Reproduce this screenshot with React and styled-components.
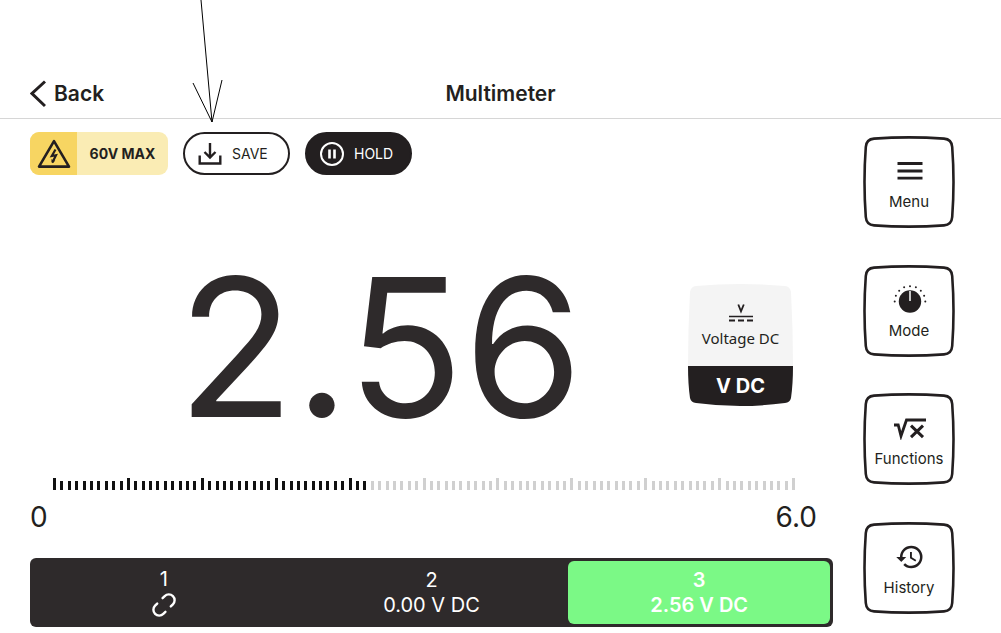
import styled, { createGlobalStyle } from "styled-components";
import { MdHistory } from "react-icons/md";

const GlobalStyle = createGlobalStyle`
  * {
    box-sizing: border-box;
  }
  body {
    margin: 0;
    background: #fff;
    color: #231f20;
    font-family: Inter, "Liberation Sans", sans-serif;
  }
  button {
    font-family: inherit;
    color: inherit;
    border: none;
    background: none;
    padding: 0;
    cursor: pointer;
  }
`;

const Header = styled.header`
  display: grid;
  grid-template-columns: 1fr auto 1fr;
  align-items: center;
  padding: 79px 30px 9px;
  border-bottom: 1px solid #d6d6d6;
`;

const BackButton = styled.button`
  justify-self: start;
  display: flex;
  align-items: center;
  gap: 8px;
  font-size: 21px;
  font-weight: 600;
  line-height: 30px;
`;

const Title = styled.h1`
  margin: 0;
  font-size: 21px;
  font-weight: 600;
  line-height: 30px;
`;

const Pointer = styled.svg`
  position: absolute;
  top: 0;
  left: 190px;
  pointer-events: none;
`;

const Layout = styled.main`
  display: grid;
  grid-template-columns: 1fr 92px;
  column-gap: 30px;
  padding: 13px 46px 6px 30px;
`;

const Meter = styled.section`
  display: flex;
  flex-direction: column;
`;

const Toolbar = styled.div`
  display: flex;
  gap: 15px;
`;

const Warning = styled.div`
  display: flex;
  align-items: center;
  width: 138px;
  height: 43px;
  border-radius: 9px;
  overflow: hidden;
  background: #faecb4;
  font-size: 14px;
  font-weight: 700;
`;

const WarningIcon = styled.div`
  display: flex;
  align-items: center;
  justify-content: center;
  width: 47px;
  height: 100%;
  background: #f7d562;
`;

const WarningText = styled.span`
  flex: 1;
  text-align: center;
`;

const Pill = styled.button`
  display: flex;
  align-items: center;
  gap: 10px;
  width: 107px;
  height: 43px;
  padding-left: 13px;
  border: 2px solid #231f20;
  border-radius: 22px;
  font-size: 14px;
  background: ${(props) => (props.$dark ? "#231f20" : "#fff")};
  color: ${(props) => (props.$dark ? "#fff" : "#231f20")};
`;

const Display = styled.div`
  display: flex;
  align-items: center;
  margin-top: 76px;
  padding-right: 40px;
`;

const Reading = styled.output`
  flex: 1;
  padding-left: 42px;
  text-align: center;
  font-size: 192px;
  line-height: 192px;
  color: #2e2a2b;
`;

const UnitCard = styled.div`
  position: relative;
  display: flex;
  flex-direction: column;
  align-items: center;
  width: 105px;
  height: 122px;
  margin-bottom: 4px;
`;

const Shape = styled.svg`
  position: absolute;
  top: 0;
  left: 0;
  width: 100%;
  height: 100%;
`;

const UnitInfo = styled.div`
  position: relative;
  display: flex;
  flex-direction: column;
  align-items: center;
  gap: 6px;
  height: 82px;
  padding-top: 18px;
  font-family: "Noto Sans", sans-serif;
  font-size: 15px;
  line-height: 20px;
`;

const UnitName = styled.div`
  position: relative;
  font-size: 20px;
  font-weight: 700;
  line-height: 40px;
  color: #fff;
`;

const Scale = styled.div`
  display: flex;
  justify-content: space-between;
  align-items: flex-end;
  height: 12px;
  margin: 35px 37px 0 23px;
`;

const Tick = styled.span`
  width: 3px;
  height: ${(props) => (props.$major ? "12px" : "9px")};
  background: ${(props) => (props.$on ? "#111" : "#d0d0d0")};
`;

const Range = styled.div`
  display: flex;
  justify-content: space-between;
  margin: 11px 16px 0 0;
  font-size: 28px;
  line-height: 32px;
`;

const Channels = styled.div`
  display: grid;
  grid-template-columns: repeat(3, 1fr);
  margin-top: 25px;
  border-radius: 6px;
  background: #2e2a2b;
`;

const Channel = styled.button`
  display: flex;
  flex-direction: column;
  align-items: center;
  justify-content: center;
  height: 63px;
  margin: 3px;
  border-radius: 6px;
  font-size: 20px;
  line-height: 25px;
  color: #fff;
  background: ${(props) => (props.$active ? "#7bf986" : "transparent")};
  font-weight: ${(props) => (props.$active ? 600 : 400)};
`;

const Side = styled.nav`
  display: flex;
  flex-direction: column;
  justify-content: space-between;
  padding: 4px 0 13px;
`;

const SideButton = styled.button`
  position: relative;
  display: flex;
  flex-direction: column;
  align-items: center;
  gap: 5px;
  height: 92px;
  padding-top: 19px;
  font-size: 15px;
  line-height: 20px;
`;

const IconBox = styled.span`
  display: flex;
  align-items: center;
  justify-content: center;
  height: 32px;
  padding-left: 2px;
`;

const MenuIcon = () => (
  <svg width="26" height="18" viewBox="0 0 26 18" stroke="#231f20" strokeWidth="2.8">
    <path d="M0.5 1.5h25M0.5 9h25M0.5 16.2h25" />
  </svg>
);

const DialIcon = () => {
  const dots = [0, 1, 2, 3, 4, 5, 6, 7, 8];
  return (
    <svg width="34" height="32" viewBox="0 0 34 32" fill="#231f20">
      <circle cx="17" cy="17.5" r="11.2" />
      <path d="M17 7v10" stroke="#d8d8d8" strokeWidth="1.8" />
      {dots.map((i) => {
        const a = Math.PI + (i * Math.PI) / 8;
        return <circle key={i} cx={17 + 15.3 * Math.cos(a)} cy={17.5 + 15.3 * Math.sin(a)} r="1" />;
      })}
    </svg>
  );
};

const RootIcon = () => (
  <svg width="34" height="24" viewBox="0 0 34 24" fill="none" stroke="#231f20" strokeWidth="2.8">
    <path d="M1 9h4.200L8 20 13.500 4H33" />
    <path d="M18 9.700 30 21.100M30 9.700 18 21.100" strokeWidth="3" />
  </svg>
);

const sideItems = [
  { label: "Menu", icon: <MenuIcon /> },
  { label: "Mode", icon: <DialIcon /> },
  { label: "Functions", icon: <RootIcon /> },
  { label: "History", icon: <MdHistory size={30} /> },
];

const ticks = Array.from({ length: 101 }, (_, i) => i);

const App = () => {
  return (
    <>
      <GlobalStyle />
      <Header>
        <BackButton>
          <svg width="16" height="28" viewBox="0 0 16 28" fill="none" stroke="#231f20" strokeWidth="3">
            <path d="M15 1.5 2 13.5 15 26" />
          </svg>
          Back
        </BackButton>
        <Title>Multimeter</Title>
      </Header>
      <Pointer width="34" height="124" viewBox="0 0 34 124" fill="none" stroke="#000" strokeWidth="1">
        <path d="M11 0 22 122M3 83l19 39L32 80" />
      </Pointer>
      <Layout>
        <Meter>
          <Toolbar>
            <Warning>
              <WarningIcon>
                <svg width="34" height="30" viewBox="0 0 34 30" fill="none" stroke="#231f20">
                  <path d="M17 2.2 32 27.6H2z" strokeWidth="2.6" strokeLinejoin="round" />
                  <path d="M18.5 10.5 14.8 17l4.2-.8-3.6 7.2" strokeWidth="2.2" />
                  <path d="M14.2 20.3l.8 4 3.3-2.6z" fill="#231f20" stroke="none" />
                </svg>
              </WarningIcon>
              <WarningText>60V MAX</WarningText>
            </Warning>
            <Pill>
              <svg width="24" height="22" viewBox="0 0 24 22" fill="none" stroke="#231f20" strokeWidth="2.4">
                <path d="M1.7 12.5v8h20.6v-8M12 0v14M6.5 9l5.5 5.5L17.5 9" />
              </svg>
              SAVE
            </Pill>
            <Pill $dark>
              <svg width="24" height="24" viewBox="0 0 24 24" fill="none" stroke="#fff">
                <circle cx="12" cy="12" r="11" strokeWidth="2" />
                <path d="M9.5 7.5v9M14.5 7.5v9" strokeWidth="2.6" />
              </svg>
              HOLD
            </Pill>
          </Toolbar>
          <Display>
            <Reading>2.56</Reading>
            <UnitCard>
              <Shape viewBox="0 0 105 122" aria-hidden="true">
                <path d="M8 2Q52 -2 97 2 102 2.5 103 8 105 45 105 82H0Q0 45 2 8 3 2.5 8 2Z" fill="#f4f4f4" />
                <path d="M0 82H105Q105 100 103 114 102 118.500 97 119 52 125 8 119 3 118.500 2 114 0 100 0 82Z" fill="#231f20" />
              </Shape>
              <UnitInfo>
                <svg width="24" height="20" viewBox="0 0 24 20" fill="none" stroke="#231f20">
                  <path d="M9.300 2.500 12 9.300 14.800 2.500" strokeWidth="1.800" />
                  <path d="M0 14.500h24" strokeWidth="1.500" />
                  <path d="M0 18.500h24" strokeWidth="1.800" strokeDasharray="6 3" />
                </svg>
                Voltage DC
              </UnitInfo>
              <UnitName>V DC</UnitName>
            </UnitCard>
          </Display>
          <Scale>
            {ticks.map((i) => (
              <Tick key={i} $major={i % 10 === 0} $on={i < 43} />
            ))}
          </Scale>
          <Range>
            <span>0</span>
            <span>6.0</span>
          </Range>
          <Channels>
            <Channel>
              <span>1</span>
              <svg width="26" height="26" viewBox="0 0 26 26" fill="none" stroke="#fff" strokeWidth="2.4" strokeLinecap="round">
                <g transform="rotate(-45 13 13)">
                  <path d="M9.200 7.200H6.200a5.800 5.800 0 0 0 0 11.600h3M16.800 7.200h3a5.800 5.800 0 0 1 0 11.600h-3" />
                </g>
              </svg>
            </Channel>
            <Channel>
              <span>2</span>
              <span>0.00 V DC</span>
            </Channel>
            <Channel $active>
              <span>3</span>
              <span>2.56 V DC</span>
            </Channel>
          </Channels>
        </Meter>
        <Side>
          {sideItems.map((item) => (
            <SideButton key={item.label}>
              <Shape viewBox="0 0 92 92" fill="none" stroke="#231f20" strokeWidth="2.6" aria-hidden="true">
                <path d="M11 2.600Q46 0.200 81 2.600C86.500 3 88.800 5.500 89.200 11Q91.800 46 89.200 81C88.800 86.500 86.500 89 81 89.400Q46 91.800 11 89.400C5.500 89 3.200 86.500 2.800 81Q0.200 46 2.800 11C3.200 5.500 5.500 3 11 2.600Z" />
              </Shape>
              <IconBox>{item.icon}</IconBox>
              {item.label}
            </SideButton>
          ))}
        </Side>
      </Layout>
    </>
  );
};

export default App;
